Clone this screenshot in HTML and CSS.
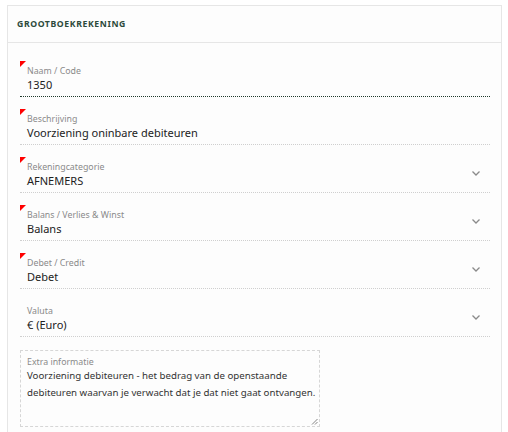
FILE: index.html
```html
<!DOCTYPE html>
<html lang="nl">
<head>
  <meta charset="UTF-8" />
  <meta name="viewport" content="width=device-width, initial-scale=1" />
  <title>Grootboekrekening</title>
  <link rel="stylesheet" href="styles.css">
</head>
<body>
  <section class="card">
    <header class="card-header">
      <h1>Grootboekrekening</h1>
    </header>

    <div class="card-body">
      <div class="field required focused">
        <label>Naam / Code</label>
        <div class="value">1350</div>
      </div>

      <div class="field required">
        <label>Beschrijving</label>
        <div class="value">Voorziening oninbare debiteuren</div>
      </div>

      <div class="field required select">
        <label>Rekeningcategorie</label>
        <div class="value">AFNEMERS</div>
        <svg class="chevron" width="8" height="5" viewBox="0 0 8 5"><path d="M0.5 0.5 L4 4 L7.5 0.5" fill="none" stroke="#8a8a8a" stroke-width="1.3"/></svg>
      </div>

      <div class="field required select">
        <label>Balans / Verlies &amp; Winst</label>
        <div class="value">Balans</div>
        <svg class="chevron" width="8" height="5" viewBox="0 0 8 5"><path d="M0.5 0.5 L4 4 L7.5 0.5" fill="none" stroke="#8a8a8a" stroke-width="1.3"/></svg>
      </div>

      <div class="field required select">
        <label>Debet / Credit</label>
        <div class="value">Debet</div>
        <svg class="chevron" width="8" height="5" viewBox="0 0 8 5"><path d="M0.5 0.5 L4 4 L7.5 0.5" fill="none" stroke="#8a8a8a" stroke-width="1.3"/></svg>
      </div>

      <div class="field select">
        <label>Valuta</label>
        <div class="value">€ (Euro)</div>
        <svg class="chevron" width="8" height="5" viewBox="0 0 8 5"><path d="M0.5 0.5 L4 4 L7.5 0.5" fill="none" stroke="#8a8a8a" stroke-width="1.3"/></svg>
      </div>

      <div class="textarea-box">
        <label>Extra informatie</label>
        <div class="textarea-text">Voorziening debiteuren - het bedrag van de openstaande debiteuren waarvan je verwacht dat je dat niet gaat ontvangen.</div>
        <svg class="resize" width="7" height="7" viewBox="0 0 7 7"><path d="M6.5 1 L1 6.5 M6.5 4 L4 6.5" stroke="#777" stroke-width="0.9"/></svg>
      </div>
    </div>
  </section>
</body>
</html>
```

FILE: styles.css
```css
body {
  margin: 5px 6px 0 7px;
  font-family: "Noto Sans", "DejaVu Sans", sans-serif;
  background: #fff;
  color: #222;
}
.card {
  border: 1px solid #e6e6e6;
  border-bottom: none;
  background: #fdfdfd;
  min-height: 430px;
}
.card-header {
  height: 36px;
  display: flex;
  align-items: center;
  padding: 0 9px;
  border-bottom: 1px solid #e6e6e6;
}
.card-header h1 {
  margin: 0;
  font-size: 8.7px;
  font-weight: 700;
  text-transform: uppercase;
  color: #2c4a3b;
  letter-spacing: 0.6px;
}
.card-body {
  padding: 6px 11px 0 12px;
}
.field {
  position: relative;
  height: 48px;
  box-sizing: border-box;
  padding: 16px 0 0 7px;
  border-bottom: 1px dotted #cfcfcf;
}
.field.focused {
  border-bottom: 1px dotted #1f3a2c;
}
.field.required::before {
  content: "";
  position: absolute;
  left: 0;
  top: 12px;
  border-top: 6px solid #ff0000;
  border-right: 6px solid transparent;
}
.field label {
  display: block;
  font-size: 8.8px;
  line-height: 12px;
  color: #8a8a8a;
}
.value {
  font-size: 11px;
  line-height: 16px;
  color: #222;
}
.chevron {
  position: absolute;
  right: 10px;
  top: 26px;
}
.textarea-box {
  position: relative;
  margin-top: 13px;
  width: 300px;
  height: 77px;
  box-sizing: border-box;
  border: 1px dashed #d6d6d6;
  padding: 5px 2px 5px 6px;
}
.textarea-box label {
  display: block;
  font-size: 8.8px;
  line-height: 12px;
  color: #8a8a8a;
}
.textarea-text {
  margin-top: -1px;
  font-size: 9.7px;
  line-height: 17px;
  color: #333;
}
.resize {
  position: absolute;
  right: 1px;
  bottom: 1px;
}
```
